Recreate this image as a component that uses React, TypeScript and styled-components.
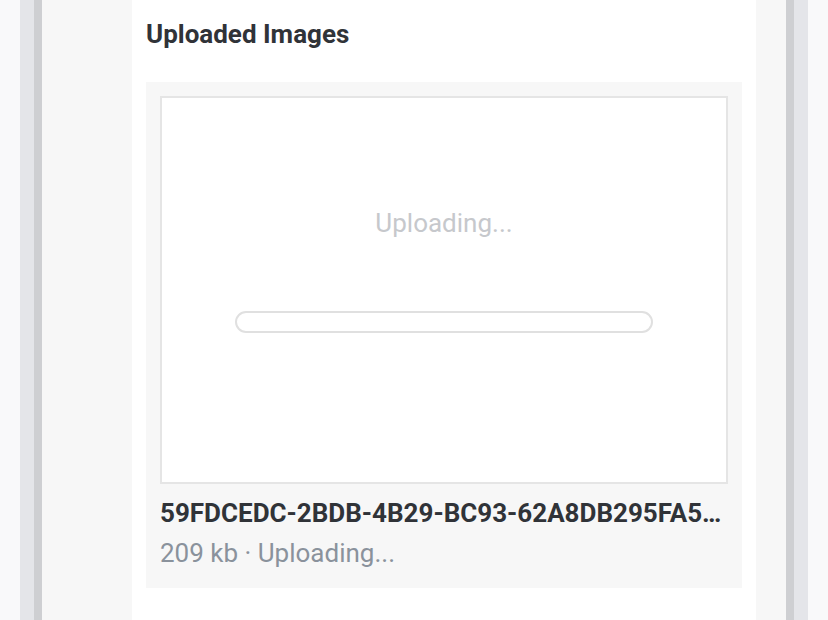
import React from "react";
import styled, { createGlobalStyle } from "styled-components";

const Global = createGlobalStyle`
  html, body { margin: 0; padding: 0; background: #f9f9fa; }
  body { font-family: Roboto, "Liberation Sans", Arial, sans-serif; }
  #root { height: 620px; }
`;

const Page = styled.div`
  display: flex;
  height: 620px;
  width: 828px;
  overflow: hidden;
  background: #f9f9fa;
`;

const Gutter = styled.div`
  width: 20px;
  flex: none;
`;

const FrameEdge = styled.div`
  width: 14px;
  flex: none;
  background: #e4e5e9;
`;

const FrameLine = styled.div`
  width: 8px;
  flex: none;
  background: #cecfd2;
`;

const Side = styled.div<{ $w: number }>`
  width: ${(p) => p.$w}px;
  flex: none;
  background: #f7f7f7;
`;

const Panel = styled.main`
  flex: 1;
  background: #ffffff;
  padding: 19px 14px 0;
  display: flex;
  flex-direction: column;
`;

const Title = styled.h2`
  margin: 0 0 33px;
  font-size: 26px;
  line-height: 30px;
  font-weight: 700;
  color: #303338;
`;

const Card = styled.div`
  background: #f7f7f7;
  padding: 14px 14px 20px;
  display: flex;
  flex-direction: column;
`;

const Preview = styled.div`
  height: 388px;
  box-sizing: border-box;
  background: #ffffff;
  border: 2px solid #e5e5e5;
  display: flex;
  flex-direction: column;
  align-items: center;
  padding-top: 110px;
`;

const PreviewLabel = styled.div`
  font-size: 26px;
  line-height: 30px;
  color: #c6c8cc;
`;

const Progress = styled.div`
  margin-top: 73px;
  width: 418px;
  height: 22px;
  box-sizing: border-box;
  border: 2px solid #e0e0e0;
  border-radius: 11px;
  background: #ffffff;
  overflow: hidden;
`;

const ProgressFill = styled.div`
  height: 100%;
  background: #e0e0e0;
`;

const FileName = styled.div`
  margin-top: 14px;
  font-size: 26px;
  line-height: 30px;
  font-weight: 700;
  color: #303338;
  white-space: nowrap;
  overflow: hidden;
  text-overflow: ellipsis;
`;

const Meta = styled.div`
  margin-top: 10px;
  font-size: 26px;
  line-height: 30px;
  color: #8a929c;
`;

export default function App() {
  const progress = 0;
  return (
    <>
      <Global />
      <Page>
        <Gutter />
        <FrameEdge />
        <FrameLine />
        <Side $w={90} />
        <Panel>
          <Title>Uploaded Images</Title>
          <Card>
            <Preview>
              <PreviewLabel>Uploading...</PreviewLabel>
              <Progress>
                <ProgressFill style={{ width: `${progress}%` }} />
              </Progress>
            </Preview>
            <FileName>59FDCEDC-2BDB-4B29-BC93-62A8DB295FA5…</FileName>
            <Meta>209 kb · Uploading...</Meta>
          </Card>
        </Panel>
        <Side $w={30} />
        <FrameLine />
        <FrameEdge />
        <Gutter />
      </Page>
    </>
  );
}
